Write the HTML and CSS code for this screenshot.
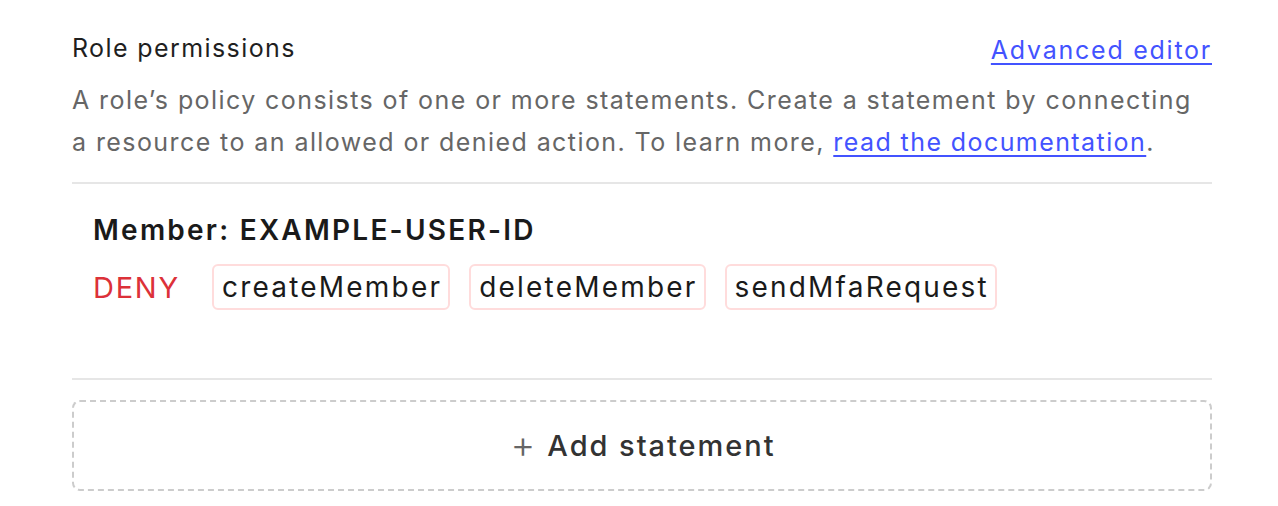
FILE: index.html
```html
<!DOCTYPE html>
<html>
<head>
<meta charset="utf-8">
<link rel="stylesheet" href="styles.css">
</head>
<body>
<div class="panel">
  <div class="header">
    <div class="title">Role permissions</div>
    <a class="link" href="#">Advanced editor</a>
  </div>
  <p class="desc">A role’s policy consists of one or more statements. Create a statement by connecting a resource to an allowed or denied action. To learn more, <a class="link" href="#">read the documentation</a>.</p>
  <div class="statement">
    <div class="member">Member: EXAMPLE-USER-ID</div>
    <div class="actions">
      <span class="effect">DENY</span>
      <span class="chip">createMember</span>
      <span class="chip">deleteMember</span>
      <span class="chip">sendMfaRequest</span>
    </div>
  </div>
  <button class="add"><span class="plus">+</span>Add statement</button>
</div>
</body>
</html>
```

FILE: styles.css
```css
html, body {
  margin: 0;
  padding: 0;
  background: #ffffff;
}
body {
  font-family: Inter, "Noto Sans", sans-serif;
}
.panel {
  width: 1140px;
  margin-left: 72px;
  padding-top: 30px;
}
.header {
  display: flex;
  justify-content: space-between;
  align-items: baseline;
}
.title {
  font-size: 25px;
  letter-spacing: 1.4px;
  line-height: 36px;
  color: #1f1f1f;
}
.link {
  color: #4353ff;
  text-decoration: underline;
  text-underline-offset: 4px;
  text-decoration-thickness: 2px;
}
.header .link {
  font-size: 25px;
  letter-spacing: 1.75px;
  margin-right: 0;
  position: relative;
  top: 2px;
}
.desc {
  margin: 13px 0 0 0;
  font-size: 25px;
  letter-spacing: 1.42px;
  line-height: 42px;
  color: #666666;
}
.statement {
  border-top: 2px solid #e6e6e6;
  border-bottom: 2px solid #e6e6e6;
  margin-top: 19px;
  padding: 28px 20px 68px 21px;
}
.member {
  font-size: 28px;
  font-weight: 600;
  letter-spacing: 2.25px;
  line-height: 36px;
  color: #1a1a1a;
}
.actions {
  display: flex;
  align-items: center;
  gap: 20px;
  margin-top: 16px;
}
.effect {
  font-size: 29px;
  letter-spacing: 1.75px;
  color: #dc3139;
  width: 100px;
  margin-right: -1px;
}
.chip {
  font-size: 28px;
  letter-spacing: 2.2px;
  line-height: 42px;
  color: #1a1a1a;
  border: 2px solid #ffdcdc;
  border-radius: 6px;
  padding: 0 6px 0 8px;
}
.chip + .chip {
  margin-left: -1px;
}
.add {
  display: flex;
  align-items: center;
  justify-content: center;
  width: 100%;
  height: 91px;
  margin-top: 20px;
  border: 2px dashed #cccccc;
  border-radius: 8px;
  background: #ffffff;
  font-family: Inter, "Noto Sans", sans-serif;
  font-size: 29px;
  letter-spacing: 1.95px;
  font-weight: 500;
  color: #333333;
}
.plus {
  font-weight: 300;
  color: #666666;
  margin-right: 14px;
  font-size: 38px;
  letter-spacing: 0;
  position: relative;
  top: -2px;
  left: 2px;
}
```
